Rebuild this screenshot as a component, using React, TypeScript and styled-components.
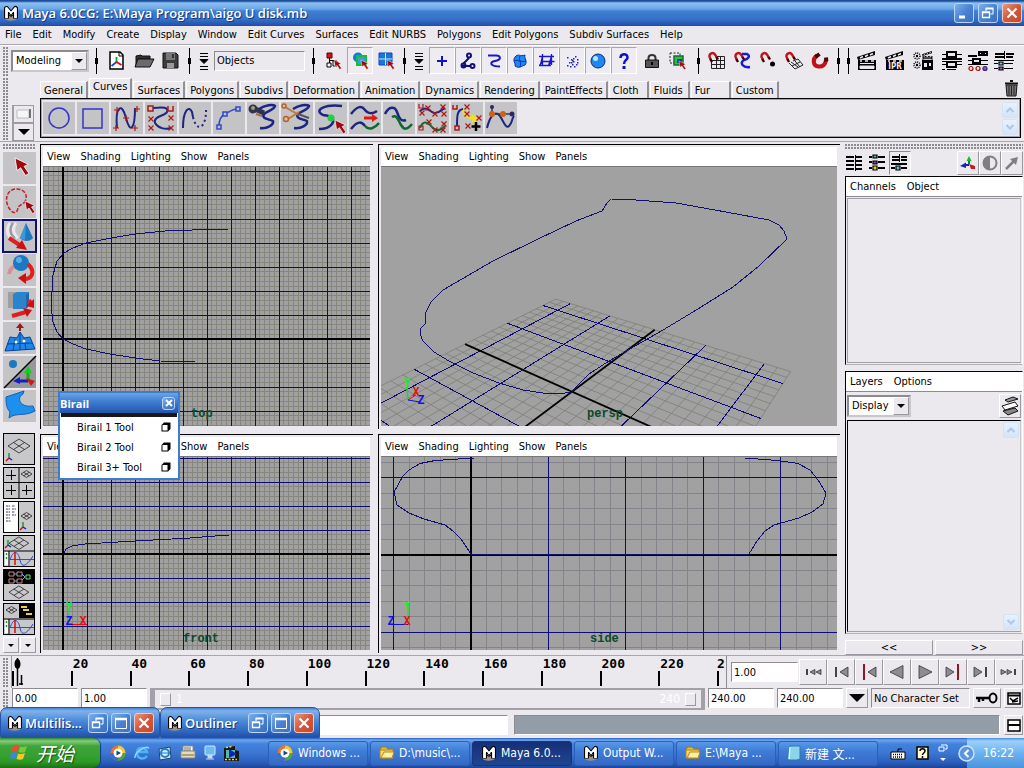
import React from "react";
import styled, { createGlobalStyle, css } from "styled-components";

const FACE = "#ebe9ed";
const UI_FONT = `"DejaVu Sans Condensed", Roboto, "Liberation Sans", "Noto Sans CJK SC", sans-serif`;
const TITLE_FONT = `"Open Sans", "Noto Sans", sans-serif`;
const NAVY = "#10106e";

const Global = createGlobalStyle`
  *, *::before, *::after { box-sizing: border-box; }
  body { margin: 0; background: ${FACE}; font: 11px ${UI_FONT}; color: #000; }
  button, input, select { font: inherit; color: inherit; margin: 0; padding: 0; border: 0; border-radius: 0; background: none; }
  svg { display: block; flex: none; }
`;

/* ---------- shared parts ---------- */

const sunken = css`
  border: 1px solid;
  border-color: #8d8b90 #fff #fff #8d8b90;
`;
const raised = css`
  border: 1px solid;
  border-color: #fff #9a989e #9a989e #fff;
`;

const Screen = styled.div`
  position: relative;
  min-height: 100vh;
  display: flex;
  flex-direction: column;
  overflow: hidden;
  background: ${FACE};
`;

const Grip = styled.div<{ $across?: boolean }>`
  flex: none;
  ${(p) => (p.$across ? "height: 6px;" : "width: 6px; align-self: stretch; margin: 2px 2px 0 3px;")}
  background-image: radial-gradient(circle at 1px 1px, #8d8b92 1px, transparent 1px);
  background-size: 3px 3px;
`;

const Field = styled.input<{ $w?: number; $flat?: boolean }>`
  ${sunken}
  flex: none;
  width: ${(p) => p.$w ?? 66}px;
  height: 20px;
  padding: 0 2px;
  background: ${(p) => (p.$flat ? FACE : "#fff")};
`;

const Art = styled.svg`
  overflow: visible;
`;

const Cross = ({ x, y, c = "#b01818", plus }: { x: number; y: number; c?: string; plus?: boolean }) => (
  <path
    d={plus ? `M${x - 3} ${y}h6M${x} ${y - 3}v6` : `M${x - 2.5} ${y - 2.5}l5 5M${x + 2.5} ${y - 2.5}l-5 5`}
    stroke={c}
    strokeWidth="1.2"
    fill="none"
  />
);

const Cursor = ({ x, y, s = 1 }: { x: number; y: number; s?: number }) => (
  <path
    transform={`translate(${x} ${y}) scale(${s})`}
    d="M0 0L1.500 9L4 7L7.500 12.500L10 11L6.500 6L9.500 4.500Z"
    fill="#a00810"
    stroke="#fff"
    strokeWidth=".6"
  />
);

/* ---------- title bar ---------- */

const TitleBar = styled.header`
  height: 26px;
  display: flex;
  align-items: center;
  padding: 0 2px 0 3px;
  gap: 3px;
  background: linear-gradient(#1c4c9c 0, #1c4c9c 1px, #8cc0ee 3px, #6ba7e6 9px, #3f80d2 11px, #3571c8 19px, #2453ae 25px, #1d479c);
`;

const TitleText = styled.h1`
  flex: 1;
  margin: 0;
  font: 600 13px/20px ${TITLE_FONT};
  color: #fff;
  text-shadow: 1px 1px 0 #16357c;
  white-space: nowrap;
`;

const CaptionButton = styled.button<{ $close?: boolean; $size?: number }>`
  flex: none;
  width: ${(p) => p.$size ?? 20}px;
  height: ${(p) => p.$size ?? 20}px;
  margin-left: 1px;
  display: grid;
  place-items: center;
  border: 1px solid ${(p) => (p.$close ? "#f0c9c0" : "#b9d4f4")};
  border-radius: 3px;
  background: ${(p) =>
    p.$close ? "linear-gradient(135deg, #e89880, #d5573a 50%, #c4492c)" : "linear-gradient(135deg, #7eb0ea, #4a83d2 50%, #3a70c4)"};
`;

const CaptionGlyph = ({ kind }: { kind: "min" | "restore" | "max" | "close" }) => (
  <Art width="12" height="12" viewBox="0 0 12 12" fill="none" stroke="#fff" strokeWidth="1">
    {kind === "min" && <path d="M1 10h6" strokeWidth="3" />}
    {kind === "restore" && (
      <>
        <path d="M4 4V1.500h7V7H8.500" />
        <path d="M3.500 1.500h8" strokeWidth="2" />
        <path d="M.5 5h7v5.500h-7zM.5 5.500h7" strokeWidth="1.300" />
      </>
    )}
    {kind === "max" && (
      <>
        <path d="M.5 1.500h11v10H.5z" />
        <path d="M0 2h12" strokeWidth="2.500" />
      </>
    )}
    {kind === "close" && <path d="M1.500 1.500l9 9M10.500 1.500l-9 9" strokeWidth="2.200" />}
  </Art>
);

const MayaLogo = () => (
  <Art width="16" height="18" viewBox="0 0 16 18">
    <path d="M1 14c2-3 12-3 14 0c-2 3-12 4-14 0z" fill="#9a9286" />
    <g fill="none" strokeLinejoin="round">
      <path d="M3.500 14.500V4.500L8 10L12.500 4.500V14.500" stroke="#000" strokeWidth="5" />
      <path d="M3.500 14V4.500L8 10L12.500 4.500V14" stroke="#fff" strokeWidth="2.800" />
      <path d="M5.500 14V8L8 11.500L10.500 8V14" stroke="#000" strokeWidth="1" />
    </g>
  </Art>
);

/* ---------- main menu ---------- */

const MenuBar = styled.nav`
  height: 19px;
  display: flex;
  align-items: center;
  gap: 11px;
  padding: 0 5px;
  border-bottom: 1px solid #a9a7ac;
  white-space: nowrap;
  box-shadow: 0 1px 0 #fff;
`;

const MenuItem = styled.button`
  line-height: 18px;
`;

/* ---------- status line ---------- */

const StatusLine = styled.div`
  height: 31px;
  display: flex;
  align-items: center;
`;

const SelectBox = styled.label<{ $w: number }>`
  position: relative;
  flex: none;
  width: ${(p) => p.$w}px;
  height: 22px;
  border: 2px solid;
  border-color: #8d8b90 #c9c7cc #c9c7cc #8d8b90;
  background: #fff;
  select {
    appearance: none;
    width: 100%;
    height: 18px;
    padding-left: 3px;
    outline: none;
  }
  &::after {
    content: "";
    position: absolute;
    right: 0;
    top: 0;
    width: 16px;
    height: 18px;
    ${raised}
    background: ${FACE};
    pointer-events: none;
  }
  svg {
    position: absolute;
    z-index: 1;
    right: 4px;
    top: 7px;
    pointer-events: none;
  }
`;

const DownTri = ({ w = 8 }: { w?: number }) => (
  <Art width={w} height={w / 2} viewBox="0 0 8 4">
    <path d="M0 0h8L4 4z" />
  </Art>
);

const Divider = styled.span`
  flex: none;
  width: 10px;
  height: 26px;
  background:
    linear-gradient(#000, #000) center / 3px 6px no-repeat,
    linear-gradient(#000, #000) center / 1px 26px no-repeat;
`;

const Group = styled.div<{ $pad?: number }>`
  flex: none;
  display: flex;
  align-items: center;
  padding: 0 ${(p) => p.$pad ?? 0}px;
`;

const ToolCell = styled.button<{ $w?: number; $pressed?: boolean }>`
  flex: none;
  width: ${(p) => p.$w ?? 26}px;
  height: 27px;
  display: grid;
  place-items: center;
  ${(p) => p.$pressed && css`
    border: 1px solid;
    border-color: #a9a7ac #fff #fff #a9a7ac;
    background: #eeecf1;
  `}
`;

const Magnet = ({ big }: { big?: boolean }) =>
  big ? (
    <g fill="none" strokeWidth="4">
      <path d="M5 3.500C0 7 1 14 6.500 14.500C11 15 13.500 12 14 8" stroke="#c01018" />
      <path d="M3.500 5L7.500 2M14.300 9.500L14 5.500" stroke="#4a0408" />
    </g>
  ) : (
    <g fill="none" strokeWidth="2.400">
      <path d="M3 8L1.500 5C1 1 5 0 7 2.500L9 6" stroke="#c01018" />
      <path d="M2.300 7L4 10M8.500 5L10 7.500" stroke="#300" />
    </g>
  );

const Clapper = ({ x = 0, s = 1, children }: { x?: number; s?: number; children?: React.ReactNode }) => (
  <g transform={`translate(${x} 0) scale(${s})`}>
    <path d="M0 6L18 0V4L1 9z" />
    <path d="M3 7l3-1.500M8 5.500l3-1.500M13 4l3-1.500" stroke={FACE} strokeWidth="1.500" />
    <path d="M1 9h18v10H1z" />
    <path d="M3 10h2M8 10h3M14 10h3" stroke={FACE} strokeWidth="1.500" />
    {children ?? <path d="M3 12.500h14M3 15v2.500h14V15z" stroke={FACE} fill={FACE} />}
  </g>
);

const Bars = ({ d, extra }: { d: string; extra?: React.ReactNode }) => (
  <Art width="20" height="20" viewBox="0 0 20 20" fill="none" stroke="#000" strokeWidth="1.2">
    <path d={d} shapeRendering="crispEdges" />
    {extra}
  </Art>
);

const icon = (w: number, h: number, body: React.ReactNode) => (
  <Art width={w} height={h} viewBox={`0 0 ${w} ${h}`}>
    {body}
  </Art>
);

const MenuMarks = () =>
  icon(10, 18, <path d="M1 1.500h8M1 4.500h8M1 14.500h8M1 17.500h8M1 7.500h8L5 11.500z" stroke="#000" strokeWidth="1" />);

const fileIcons = [
  icon(15, 19, <>
    <path d="M1 1h10l3 3v14H1z" fill="#fff" stroke="#000" strokeWidth="1.500" />
    <path d="M10 1v4h4" fill="none" stroke="#000" />
    <path d="M7.500 6v5" stroke="#10a030" strokeWidth="1.800" />
    <path d="M7.500 11l-5 4" stroke="#2040d0" strokeWidth="1.800" />
    <path d="M7.500 11l5 3" stroke="#d01010" strokeWidth="1.800" />
  </>),
  icon(20, 14, <>
    <path d="M2 2l5-1 1 1h8v3H4L2 12z" fill="#333" stroke="#111" />
    <path d="M4 5h16l-4 8H1z" fill="#6b6b6b" stroke="#111" />
  </>),
  icon(17, 17, <>
    <path d="M1 1h13l2 2v13H1z" fill="#3c3c3c" stroke="#111" />
    <path d="M4 1h9v7H4z" fill="#777" />
    <path d="M5 11h7v5H5z" fill="#999" />
    <path d="M10 2h2v4h-2z" fill="#333" />
  </>),
];

const modeIcons = [
  icon(16, 17, <>
    <path d="M1 1h5v5H1z" fill="#e01010" stroke="#500" />
    <path d="M3.500 6v6M3.500 8.500h5V12" fill="none" stroke="#000" />
    <path d="M1 11h4v4H1zM7 9h4v5H7z" fill="#fff" stroke="#000" />
    <Cursor x={8} y={8} s={0.75} />
  </>),
  icon(17, 17, <>
    <circle cx="6" cy="5.500" r="5" fill="#1878d8" />
    <path d="M5 4h9v9H5z" fill="#3a9be0" stroke="#10c030" strokeWidth="2" />
    <Cursor x={9} y={8} s={0.75} />
  </>),
  icon(17, 17, <>
    <path d="M1 1h13v12H1z" fill="#1878d8" stroke="#1040c0" />
    <path d="M7.500 1v12M1 7h13" stroke="#c8e4ff" />
    <Cursor x={9} y={8} s={0.75} />
  </>),
];

const maskIcons = [
  icon(12, 12, <path d="M6 1v10M1 6h10" stroke="#1010d0" strokeWidth="2" />),
  icon(16, 18, <g fill="none" stroke="#101078" strokeWidth="2">
    <circle cx="9" cy="3.500" r="2" /><path d="M9 6L3 12M2 14h9" /><circle cx="3.500" cy="13.500" r="2" /><circle cx="12.500" cy="14" r="2" />
  </g>),
  icon(14, 14, <path d="M1 1.500h8c5 0 5 4 1 5l-4 1c-4 2-1 5 7 5" fill="none" stroke="#1818c8" strokeWidth="2" />),
  icon(16, 16, <>
    <path d="M3 4C6 0 8 4 13 2C12 6 16 8 13 12C9 13 8 16 3 13C4 10 0 8 3 4z" fill="#1c88f0" stroke="#0a30b0" />
    <path d="M2 8C7 6 9 10 14 8M8 3C6 7 10 9 8 14" fill="none" stroke="#0a30b0" />
  </>),
  icon(17, 16, <g fill="none" stroke="#1818c8" strokeWidth="1.300">
    <path d="M4.500 1v12M13.500 1v11M1 3.500h15M1 12.500h12M3.500 8.500h13M4.500 3.500l-2 8M13.500 3.500l-3 9M4.500 8.500l-3 4M13.500 8.500l-3 4" />
  </g>),
  icon(14, 14, <g fill="#2020c0">
    {[[2, 3], [6, 5], [10, 2], [12, 5], [8, 7], [4, 8], [7, 10], [2, 11], [5, 12], [11, 10], [9, 12], [12, 8], [7, 6], [8, 4], [6, 8]].map(([x, y]) => (
      <rect key={`${x}-${y}`} x={x} y={y} width="1.500" height="1.500" />
    ))}
  </g>),
  icon(16, 16, <>
    <circle cx="8" cy="8" r="7" fill="#1c88f0" stroke="#0a2a80" /><circle cx="5.500" cy="5.500" r="2.500" fill="#b8e8ff" />
  </>),
  icon(10, 16, <>
    <path d="M1.500 5C1.500 0 8.500 0 8.500 4.500C8.500 7 5 7 5 11" fill="none" stroke="#1010c8" strokeWidth="2.500" />
    <rect x="3.500" y="13" width="3" height="3" fill="#1010c8" />
  </>),
];

const lockIcons = [
  icon(14, 14, <>
    <path d="M3.500 6V4c0-4 7-4 7 0v2" fill="none" stroke="#333" strokeWidth="2" />
    <path d="M.5 6h13v7.500H.5z" fill="#555" stroke="#111" /><rect x="6" y="8" width="2" height="3" />
  </>),
  icon(18, 18, <>
    <path d="M1 1h10v10H1z" fill="none" stroke="#222" strokeDasharray="2 1.500" />
    <path d="M5 4h9v9H5z" fill="#28c050" stroke="#107030" strokeWidth="1.500" /><path d="M8 7h5v4H8z" fill="#1a3c90" />
    <Cursor x={10} y={9} s={0.7} />
  </>),
];

const snapIcons = [
  icon(17, 17, <><path d="M7 4.500h9.500v12h-13V9M8.500 5v11M12.500 5v11M4 8.500h12M4 12.500h12" fill="none" stroke="#222" /><Magnet /></>),
  icon(17, 17, <><path d="M8 2h5c4 2 1 5-3 6c-5 3-1 8 6 7" fill="none" stroke="#1818d8" strokeWidth="2.500" /><Magnet /></>),
  icon(17, 17, <><circle cx="12.500" cy="12" r="2.500" /><Magnet /></>),
  icon(19, 18, <><path d="M4 11l6 6 8-4-5-6-5 2M7 14l8-4M10 9l5 6M6 10l7 5" fill="none" stroke="#222" /><Magnet /></>),
  icon(17, 17, <Magnet big />),
];

const renderIcons = [
  icon(20, 19, <Clapper />),
  icon(20, 19, <Clapper><text x="10" y="18" textAnchor="middle" fontSize="8" fontWeight="bold" fill={FACE}>IPR</text></Clapper>),
  icon(20, 19, <>
    <g fill="none" stroke="#000" strokeDasharray="1 1" strokeWidth="1.500"><circle cx="4" cy="5" r="3" /><circle cx="4" cy="14" r="3" /></g>
    <circle cx="4" cy="5" r="1.200" /><circle cx="4" cy="14" r="1.200" />
    <Clapper x={9} s={0.55} /><path d="M9 9h11v10H9z" /><path d="M11 12h3v4h-3zM16 12h2v3h-2z" fill={FACE} />
  </>),
];

const editorIcons = [
  <Bars key="a" d="M0 3.500h5M14 3.500h6M5 1h9v5H5zM0 8h20M0 13.500h5M14 13.500h6M5 11h9v5H5zM5 18.500h9M0 18.500h3M0 10.500h4M15 10.500h5" />,
  <Bars key="b" d="M0 5h9M11 1h3v3h-3zM16 1h3v3h-3zM0 9.500h5M13 9.500h7M5 8h7v4H5zM0 13.500h20" extra={<>
    <circle cx="3" cy="17.500" r="2" stroke="#a01010" /><circle cx="10" cy="17.500" r="2" stroke="#a01010" /><circle cx="17" cy="17.500" r="2" stroke="#402080" fill="#806090" /></>} />,
  <Bars key="c" d="M1 3h9M1 6h9M10.500 0v8M12 3h8M12 6h7M0 9.500h20M0 12.500h4M10 12.500h9M0 17.500h4M10 17.500h9" extra={<>
    <path d="M5 11h4v3H5z" fill="#60d0d0" /><path d="M5 16h4v3H5z" fill="#a060c0" /></>} />,
];

/* ---------- shelf ---------- */

const ShelfArea = styled.section`
  height: 66px;
  display: flex;
  border-bottom: 1px solid #a9a7ac;
`;

const ShelfSwitch = styled.div`
  width: 24px;
  display: flex;
  flex-direction: column;
  justify-content: flex-end;
  align-items: flex-start;
  margin-left: 1px;
`;

const ShelfSwitchButton = styled.button`
  width: 22px;
  height: 18px;
  display: grid;
  place-items: center;
  ${raised}
  border-left: 2px solid #a09ea4;
  border-top-color: #a09ea4;
`;

const ShelfMain = styled.div`
  flex: 1;
  min-width: 0;
  padding: 2px 3px 0 4px;
`;

const TabRow = styled.div`
  display: flex;
  align-items: flex-end;
  height: 20px;
  gap: 1px;
`;

const Tab = styled.button<{ $active?: boolean }>`
  flex: none;
  height: ${(p) => (p.$active ? 20 : 17)}px;
  padding: 0 3px;
  min-width: 40px;
  text-align: left;
  border-right: 2px solid #918f95;
  border-top: 1px solid #fff;
  border-left: 1px solid #fff;
  ${(p) => p.$active && "padding-bottom: 4px;"}
`;

const Trash = styled.button`
  margin-left: auto;
  width: 16px;
  height: 20px;
`;

const ShelfBody = styled.div`
  height: 40px;
  display: flex;
  align-items: center;
  gap: 2px;
  padding: 0 2px;
  border: 1px solid #000;
  box-shadow: inset 0 0 0 1px #a3a1a7;
`;

const ShelfButton = styled.button`
  flex: none;
  width: 32px;
  height: 32px;
  background: #c4c3c6;
`;

const ScrollPair = styled.div`
  margin-left: auto;
  display: flex;
  flex-direction: column;
  gap: 1px;
`;

const ScrollButton = styled.button`
  width: 16px;
  height: 16px;
  display: grid;
  place-items: center;
  border: 1px solid #d4e4f7;
  border-radius: 2px;
  background: linear-gradient(#e6f1fd, #d4e5fa);
`;

const Chevron = ({ down }: { down?: boolean }) => (
  <Art width="8" height="6" viewBox="0 0 8 6" fill="none" stroke="#b0c6e2" strokeWidth="2">
    <path d={down ? "M0.500 1L4 4.500L7.500 1" : "M0.500 5L4 1.500L7.500 5"} />
  </Art>
);

const curve = { fill: "none", stroke: "#1c2484", strokeWidth: 2 };
const S_CURVE = "M12 7C18 3 26 2 28 4C27 8 20 9 17 12C14 17 22 17 26 19C27 23 20 27 13 26";

const shelfIcons: [string, React.ReactNode][] = [
  ["Circle", <circle cx="16" cy="16" r="10" fill="none" stroke="#3434cc" strokeWidth="1.500" />],
  ["Square", <path d="M6 7h19v19H6z" fill="none" stroke="#3434cc" strokeWidth="1.500" />],
  ["CV Curve", <><path d="M6 26C4 4 11 0 15 16S24 28 24 6" {...curve} /><Cross x={5} y={26} plus /><Cross x={6} y={8} plus /><Cross x={15} y={16} plus /><Cross x={24} y={26} plus /><Cross x={26} y={7} plus /></>],
  ["EP Curve", <><path d="M8 6C18 5 24 5 22 10C20 14 8 14 10 21C13 26 20 28 26 26" {...curve} />
    <path d="M3 4h5v5H3zM23 4v5h5V4" fill="none" stroke="#b01818" strokeWidth="1.500" /><Cross x={6} y={17} /><Cross x={6} y={26} /><Cross x={26} y={16} /><Cross x={26} y={26} /></>],
  ["Pencil Curve", <><path d="M4 26C4 8 10 3 13 10L14 15" {...curve} /><path d="M14 15C18 32 28 26 27 5" {...curve} strokeDasharray="2 3" /></>],
  ["Arc", <><path d="M6 24C6 18 8 14 12 12S20 7 24 7" fill="none" stroke="#3048d0" strokeWidth="1.500" />
    <path d="M4 23h4v4H4zM10 10h4v4h-4zM23 5h4v4h-4z" fill="#c4c3c6" stroke="#3048d0" strokeWidth="1.500" /></>],
  ["Attach", <><path d={S_CURVE} {...curve} strokeWidth="2.500" /><circle cx="6" cy="7" r="4.500" fill="#2c3450" /><path d="M6 6L17 11" stroke="#2c3450" strokeWidth="5" /><circle cx="6" cy="6" r="2" fill="#b09878" /><path d="M9 12l6 2" stroke="#a86a40" strokeWidth="2" /></>],
  ["Detach", <><path d={S_CURVE} {...curve} strokeWidth="2.500" /><path d="M4 5L18 13M7 17L18 10" stroke="#c07840" strokeWidth="2" /><circle cx="3" cy="4" r="2" fill="none" stroke="#c06020" strokeWidth="1.500" /><circle cx="5" cy="17" r="2.500" fill="none" stroke="#c06020" strokeWidth="1.500" /><path d="M17 12l11 4" stroke="#555" strokeWidth="2" /></>],
  ["Insert Knot", <><path d="M27 4C10 2 -2 8 8 13C18 14 20 18 17 22C14 26 9 27 4 27" {...curve} strokeWidth="2.500" /><circle cx="16" cy="16" r="3.500" fill="#20d040" /><Cursor x={20} y={18} s={1.1} /></>],
  ["Extend", <><path d="M2 12C9 3 13 4 16 8S24 12 28 9M2 27C9 18 13 20 16 24" {...curve} strokeWidth="2.500" /><path d="M16 24C20 29 26 26 30 21" fill="none" stroke="#0c6a30" strokeWidth="2.500" /><path d="M15 14.500h8v-2.500l6 4-6 4v-2.500h-8z" fill="#e01818" /></>],
  ["Offset", <><path d="M2 12C6 4 12 4 14 10S18 20 23 18" {...curve} strokeWidth="2.500" /><path d="M9 15C14 12 15 18 18 23S24 28 29 22" fill="none" stroke="#0c6a30" strokeWidth="2.500" /></>],
  ["Rebuild", <><path d="M3 9C10 3 13 10 17 11S24 8 28 6" {...curve} /><path d="M3 26C7 16 12 22 16 26S24 28 28 24" fill="none" stroke="#0c6a30" strokeWidth="2" />
    <Cross x={5} y={11} /><Cross x={11} y={6} /><Cross x={18} y={12} /><Cross x={26} y={5} /><Cross x={27} y={12} /><Cross x={12} y={20} /><Cross x={18} y={28} /><Cross x={27} y={22} /><Cross x={26} y={28} /><path d="M2 2v4h4V2M2 24h4v4H2z" fill="none" stroke="#b01818" strokeWidth="1.200" /></>],
  ["Add Points", <><path d="M6 24C6 14 6 8 12 7" {...curve} /><path d="M12 8C14 14 18 16 24 17M21 13l5 4-5 3" fill="none" stroke="#f0e020" strokeWidth="2.500" /><path d="M2 3v4h4V3M4 24h4v4H4z" fill="none" stroke="#b01818" strokeWidth="1.500" /><Cross x={16} y={5} /><Cross x={17} y={24} /><Cross x={16} y={12} /><Cross x={28} y={16} /><path d="M25 20v9M20.500 24.500h9" stroke="#000" strokeWidth="2.500" /></>],
  ["Curve Editing", <><path d="M2 26C5 14 9 10 13 12S20 28 24 24S26 18 29 14" {...curve} /><path d="M7 5V12M7 12H27" stroke="#383848" strokeWidth="1.500" /><circle cx="7" cy="5" r="2" fill="#28286a" /><circle cx="7" cy="12" r="3" fill="#d06018" /><circle cx="18" cy="12" r="3" fill="#d06018" /><circle cx="27" cy="12" r="2.500" fill="#28286a" /></>],
];

/* ---------- tool box ---------- */

const Workspace = styled.main`
  flex: 1;
  display: flex;
  align-items: stretch;
`;

const ToolBox = styled.aside`
  flex: none;
  width: 40px;
  padding: 2px 4px 2px 3px;
  display: flex;
  flex-direction: column;
  gap: 2px;
`;

const ToolButton = styled.button<{ $active?: boolean }>`
  width: 33px;
  height: 32px;
  display: grid;
  place-items: center;
  background: #c4c3c6;
  ${(p) => p.$active && "outline: 2px solid #10107c; outline-offset: -1px;"}
`;

const LayoutButtons = styled.div`
  margin-top: auto;
  display: flex;
  flex-direction: column;
  gap: 2px;
`;

const LayoutButton = styled.button`
  width: 32px;
  height: 32px;
  border: 1px solid #000;
  background: #c8c7ca;
`;

const ArrowPair = styled.div`
  display: flex;
  gap: 1px;
  button {
    width: 16px;
    height: 16px;
    display: grid;
    place-items: center;
    ${raised}
  }
`;

const RedArrow = ({ d, head }: { d: string; head: string }) => (
  <><path d={d} fill="none" stroke="#e02020" strokeWidth="4" /><path d={head} fill="#d01010" /></>
);

const toolIcons: [string, React.ReactNode][] = [
  ["Select", <Cursor x={11} y={6} s={1.4} />],
  ["Lasso", <><path d="M20 17C26 9 19 2 11 3S0 14 5 22S14 26 14 21L21 16" fill="none" stroke="#c02030" strokeWidth="1.500" strokeDasharray="4 1.500" /><Cursor x={21} y={15} s={1} /></>],
  ["Move", <><path d="M6 3C2 8 3 15 7 18M12 3C8 8 9 14 14 18" fill="none" stroke="#e8e8ea" strokeWidth="3" /><path d="M9 3C5 8 6 15 11 18" fill="none" stroke="#9a9a9e" strokeWidth="2" /><path d="M22 3L29 18C26 22 19 22 16 18z" fill="#1c78c0" /><path d="M22 3L16 18c2 1 4 2 5 2z" fill="#3c98d8" /><RedArrow d="M5 18L17 26" head="M23 30L12 28L18 20z" /></>],
  ["Rotate", <><path d="M5 20C6 14 10 12 14 12" fill="none" stroke="#d89090" strokeWidth="4" /><circle cx="17" cy="9" r="8" fill="#1c78c0" /><circle cx="15" cy="6" r="3" fill="#58acec" /><path d="M24 10C32 18 28 25 20 25" fill="none" stroke="#e02020" strokeWidth="4" /><path d="M14 24L22 19V30z" fill="#d01010" /></>],
  ["Scale", <><path d="M4 4h13v16H4z" fill="#a0a0a4" /><path d="M9 6h13l3-2v14l-3 3H9z" fill="#1c68a8" /><path d="M9 6l4-2h12l-3 3v14h-13z" fill="#2a84cc" /><RedArrow d="M8 28L22 24" head="M28 22L19 20L23 29z" /><RedArrow d="M25 12L28 17" head="M30 20L22 18L30 11z" /></>],
  ["Soft Modification", <><path d="M1 29L6 15L13 16L16 10L20 16L26 15L31 27z" fill="#1c88e8" stroke="#0a40a0" /><path d="M3 22L28 21M11 17L9 29M20 16L22 28M16 10V28" stroke="#0a40a0" /><path d="M16 9V4" stroke="#a01818" strokeWidth="2" /><path d="M16 1L12 6h8z" fill="#a01818" /><circle cx="12" cy="20" r="1.500" fill="#ffc" /><circle cx="20" cy="19" r="1.500" fill="#ffc" /></>],
  ["Show Manipulator", <><path d="M32 0V32H0z" fill="#98979a" /><path d="M0 32L32 0" stroke="#000" strokeWidth="1.500" /><circle cx="9" cy="8" r="4" fill="#1c78c0" /><path d="M24 24V13" stroke="#10b020" strokeWidth="3" /><path d="M24 10L20 17h8z" fill="#10d020" /><path d="M24 25H13" stroke="#1020c0" strokeWidth="3" /><path d="M9 25L16 21V28z" fill="#1020d0" /><path d="M22 22L31 25L27 30z" fill="#d01818" /></>],
  ["Last Tool", <path d="M2 7L20 1L19 4C12 8 16 18 29 16L31 21C20 27 12 22 5 28L6 22C2 18 2 12 2 7z" fill="#1c90ec" stroke="#1460b8" />],
];

const Diamond = ({ x, y, s = 1 }: { x: number; y: number; s?: number }) => (
  <g transform={`translate(${x} ${y}) scale(${s})`} fill="none" stroke="#222" strokeWidth={0.8 / s}>
    <path d="M0 8L11 1L22 8L11 15zM5.500 4.500L16.500 11.500M16.500 4.500L5.500 11.500" />
  </g>
);
const MiniAxis = ({ x, y }: { x: number; y: number }) => (
  <g transform={`translate(${x} ${y})`} fill="none" strokeWidth="1.500">
    <path d="M0 0v-5" stroke="#10a030" /><path d="M0 0l-3 3" stroke="#d01010" /><path d="M0 0l3 2" stroke="#1020d0" />
  </g>
);
const GraphArt = () => (
  <><path d="M0 15h30M5 15v15" stroke="#000" fill="none" /><path d="M1 16h3v13H1z" fill="#fff" /><path d="M2.500 17v2M2.500 21v2" stroke="#10a030" strokeWidth="1.500" /><path d="M6 23.500h24" stroke="#555" /><path d="M6 24C9 14 14 14 16 24S24 28 29 20" fill="none" stroke="#2848d0" /><path d="M11 16v13" stroke="#d01010" strokeWidth="1.500" /></>
);
const layoutIcons: [string, React.ReactNode][] = [
  ["Single Perspective", <><Diamond x={4} y={4} /><MiniAxis x={5} y={24} /></>],
  ["Four View", <><path d="M15 0v30M0 14.500h30M7.500 2v10M2 7.500h10M7.500 17v10M2 22.500h10M22.500 17v10M18 22.500h10" fill="none" stroke="#000" /><Diamond x={17} y={2} s={0.5} /></>],
  ["Outliner / Persp", <><path d="M0 0h14v30H0z" fill="#fff" /><path d="M14.500 0v30" stroke="#000" /><path d="M2 4h4M8 4h3M2 7h4M8 7h4M2 10h4M8 10h3M2 13h4M8 13h4M2 16h4M2 19h5" stroke="#446" strokeDasharray="2 .5" /><Diamond x={17} y={10} s={0.5} /><MiniAxis x={19} y={25} /></>],
  ["Persp / Graph", <><Diamond x={5} y={0} s={0.9} /><MiniAxis x={4} y={9} /><GraphArt /></>],
  ["Hypershade / Persp", <><path d="M0 0h30v14H0z" /><path d="M5 2h5v4H5zM13 2h5v4h-5zM5 9h5v4H5zM13 9h5v4h-5z" fill="none" stroke="#c88" /><path d="M22 5h4v4h-4z" fill="none" stroke="#6e6" /><path d="M10 4h3M10 11h3M18 4l3 3-3 3" stroke="#7ac" fill="none" /><Diamond x={5} y={15} s={0.9} /></>],
  ["Persp / Hypergraph / Graph", <><Diamond x={2} y={2} s={0.5} /><path d="M15 0h15v14H15z" /><path d="M17 3h6M19 6h6M22 10h6" stroke="#e8d040" strokeWidth="2" /><GraphArt /></>],
];

/* ---------- viewports ---------- */

const Views = styled.div`
  flex: 1;
  min-width: 0;
  display: grid;
  grid-template-columns: minmax(0, 333fr) minmax(0, 462fr);
  grid-template-rows: minmax(0, 285fr) minmax(0, 219fr);
  gap: 5px;
  padding: 2px 2px 2px 0;
`;

const ViewPanel = styled.section`
  display: flex;
  flex-direction: column;
  border-left: 1px solid #000;
  border-top: 1px solid #000;
  padding: 2px 3px 3px 2px;
`;

const ViewMenu = styled.nav`
  height: 19px;
  flex: none;
  display: flex;
  align-items: center;
  gap: 10px;
  padding-left: 4px;
  background: #fff;
`;

const Canvas = styled.svg`
  flex: 1;
  width: 100%;
  min-height: 0;
  border-top: 1px solid #77767a;
  background: #a1a1a1;
  overflow: hidden;
`;

const CanvasLabel = styled.text`
  font: bold 12px "Liberation Mono", monospace;
`;

type Box = [number, number, number, number];
type Pt = [number, number];

const orthoGrid = ([x, y, w, h]: Box, [ox, oy]: Pt, major: number) => {
  let minorD = "";
  let majorD = "";
  const step = major / 5;
  const add = (n: number, d: string) => {
    if (n % 5 === 0) majorD += d;
    else minorD += d;
  };
  for (let n = Math.ceil((x - ox) / step); ox + n * step < x + w; n++)
    if (n !== 0) add(n, `M${Math.floor(ox + n * step) + 0.5} ${y}v${h}`);
  for (let n = Math.ceil((y - oy) / step); oy + n * step < y + h; n++)
    if (n !== 0) add(n, `M${x} ${Math.floor(oy + n * step) + 0.5}h${w}`);
  return { minorD, majorD };
};

const Axis = ({ at, c, children }: { at: Pt; c: string; children: string }) => (
  <CanvasLabel x={at[0]} y={at[1]} fill={c} textAnchor="middle">{children}</CanvasLabel>
);

const Ortho = ({ box, origin, major, minorColor, children }: { box: Box; origin: Pt; major: number; minorColor: string; children: React.ReactNode }) => {
  const { minorD, majorD } = orthoGrid(box, origin, major);
  return (
    <Canvas viewBox={box.join(" ")} preserveAspectRatio="xMinYMin slice">
      <g fill="none" shapeRendering="crispEdges">
        <path d={minorD} stroke={minorColor} />
        <path d={majorD} stroke="#0c0c74" />
        <path d={`M${origin[0]} ${box[1]}v${box[3]}M${box[0]} ${origin[1]}h${box[2]}`} stroke="#000" strokeWidth="2" />
      </g>
      {children}
    </Canvas>
  );
};

/* Projects a ground-plane point (grid units) onto the perspective view. */
const project = (u: number, v: number): string => {
  const w = 1 - 0.0166 * u + 0.022 * v;
  const x = (22.3 * u + 39.06 * v + 588) / w / 3 + 376;
  const y = (1.917 * u - 3.246 * v + 743) / w / 3 + 144;
  return `${x.toFixed(1)} ${y.toFixed(1)}`;
};

const PerspGrid = () => {
  let minorD = "";
  let majorD = "";
  for (let n = -12; n <= 12; n++) {
    const d = `M${project(n, -12)}L${project(n, 12)}M${project(-12, n)}L${project(12, n)}`;
    if (n === 0) continue;
    if (n % 5 === 0) majorD += d;
    else minorD += d;
  }
  return (
    <g fill="none">
      <path d={minorD} stroke="#7f7f76" strokeWidth=".8" />
      <path d={majorD} stroke="#0c0c74" shapeRendering="crispEdges" />
      <path d={`M${project(0, -12)}L${project(0, 12)}M${project(-12, 0)}L${project(12, 0)}`} stroke="#000" strokeWidth="1.800" />
    </g>
  );
};

const CURVE = { fill: "none", stroke: NAVY, strokeWidth: 1, shapeRendering: "crispEdges" as const };
const LABEL = "#0c4a2c";

const TopView = () => (
  <Ortho box={[43, 167, 327, 259]} origin={[63, 339]} major={24} minorColor="#86867e">
    <polyline {...CURVE} points="229,229 192,230 165,231 135,234 111,238 86,243 73,248 64,253 57,261 53,275 52,292 51,305 53,322 57,332 63,339 73,344 86,349 110,354 135,358 160,361 195,362" />
    <CanvasLabel x="191" y="417" fill={LABEL}>top</CanvasLabel>
  </Ortho>
);

const PerspView = () => (
  <Canvas viewBox="381 167 456 259" preserveAspectRatio="xMinYMin slice">
    <PerspGrid />
    <polygon {...CURVE} points="611,199 629,199.500 676,203 726,212 769,220 779,225 784,231 787,239 759,266 733,287 693,312 663,330 609,361 589,374 578,385 572,392 559,394 543,393 523,390 499,383 473,373 449,361 434,352 423,341 420,334 421,328 425,324 426,312 431,302 443,290 493,261 536,240 576,221 602,211 607,203" />
    <path d="M407 387L408 400" stroke="#10e020" strokeWidth="1.500" /><path d="M408 400l8-5" stroke="#e01010" /><path d="M408 400l12 2" stroke="#1010e0" />
    <Axis at={[407, 387]} c="#10f020">Y</Axis>
    <Axis at={[416, 396]} c="#e01010">X</Axis>
    <Axis at={[421, 404]} c="#1010e0">Z</Axis>
    <CanvasLabel x="587" y="417" fill={LABEL}>persp</CanvasLabel>
  </Canvas>
);

const FrontView = () => (
  <Ortho box={[43, 457, 327, 193]} origin={[63, 554]} major={24} minorColor="#86867e">
    <polyline {...CURVE} points="64,553 66,549 72,546 85,544 110,542.500 135,541 190,538 215,536 229,535" />
    <path d="M69 608v12" stroke="#10e020" /><path d="M69 624.500h18" stroke="#e01010" />
    <Axis at={[69, 610]} c="#10f020">Y</Axis>
    <Axis at={[69, 625]} c="#1010e0">Z</Axis>
    <Axis at={[83, 625]} c="#e01010">X</Axis>
    <CanvasLabel x="183" y="642" fill={LABEL}>front</CanvasLabel>
  </Ortho>
);

const SideView = () => (
  <Ortho box={[381, 457, 456, 193]} origin={[471, 555]} major={77.4} minorColor="#84848a">
    <path d="M471 554.500H749" {...CURVE} />
    <polyline {...CURVE} points="474,458 435,460.500 420,463.500 409,470 403,476 394,492 397,505 409,513 424,519 445,525 453,531 461,539 471,554" />
    <polyline {...CURVE} points="745,458 777,460.500 798,463.500 810,470 818,480 826,493 823,504 812,512 799,518 774,525 765,531 757,541 749,554" />
    <path d="M408 608v16" stroke="#10e020" /><path d="M391 624.500h17" stroke="#1010e0" />
    <Axis at={[407, 610]} c="#10f020">Y</Axis>
    <Axis at={[391, 625]} c="#1010e0">Z</Axis>
    <Axis at={[407, 625]} c="#e01010">X</Axis>
    <CanvasLabel x="590" y="642" fill={LABEL}>side</CanvasLabel>
  </Ortho>
);

const View = ({ name, children }: { name: string; children: React.ReactNode }) => (
  <ViewPanel aria-label={name}>
    <ViewMenu>
      {["View", "Shading", "Lighting", "Show", "Panels"].map((m) => (
        <MenuItem key={m}>{m}</MenuItem>
      ))}
    </ViewMenu>
    {children}
  </ViewPanel>
);

/* ---------- channel box ---------- */

const SidePanel = styled.aside`
  flex: none;
  width: 182px;
  padding: 2px 1px 0 3px;
  display: flex;
  flex-direction: column;
`;

const SideTools = styled.div`
  height: 26px;
  display: flex;
  align-items: center;
  span { flex: 1; }
`;

const SideTool = styled.button<{ $look?: "up" | "in" }>`
  width: 22px;
  height: 24px;
  display: grid;
  place-items: center;
  ${(p) => p.$look === "up" && raised}
  ${(p) => p.$look === "in" && sunken}
`;

const Box = styled.section<{ $grow: number }>`
  flex: ${(p) => p.$grow} 1 0;
  display: flex;
  flex-direction: column;
  border: 1px solid #000;
  border-right-color: #fff;
  border-bottom-color: #b5b3b8;
  margin-bottom: 6px;
`;

const BoxMenu = styled.nav`
  height: 20px;
  display: flex;
  align-items: center;
  gap: 11px;
  padding-left: 4px;
  background: #fff;
  border-bottom: 1px solid #8d8b90;
`;

const BoxList = styled.div<{ $dark?: boolean }>`
  flex: 1;
  margin: 1px;
  border: 1px solid ${(p) => (p.$dark ? "#000" : "#a3a1a7")};
  border-right-color: #c9c7cc;
  border-bottom-color: #a3a1a7;
  display: flex;
  flex-direction: column;
  justify-content: space-between;
  align-items: flex-end;
  padding: 1px;
`;

const LayerBar = styled.div`
  height: 27px;
  padding: 0 1px;
  display: flex;
  align-items: center;
  justify-content: space-between;
`;

const PagerRow = styled.div`
  height: 15px;
  display: flex;
  gap: 2px;
  button {
    flex: 1;
    ${raised}
    display: grid;
    place-items: center;
  }
`;

/* ---------- time and range sliders ---------- */

const TimeRow = styled.section`
  height: 33px;
  display: flex;
  border-top: 1px solid #a9a7ac;
  align-items: center;
`;

const Ruler = styled.div`
  flex: 1;
  min-width: 0;
  align-self: stretch;
  display: flex;
  overflow: hidden;
  border-right: 1px solid #8d8b90;
  border-left: 1px solid #9a989e;
  margin-right: 4px;
`;

const Tick = styled.div<{ $last?: boolean }>`
  flex: ${(p) => (p.$last ? "0 0 9px" : "1 1 0")};
  min-width: 0;
  font: bold 13px/14px "DejaVu Sans Mono", monospace;
  padding-top: 1px;
  position: relative;
  text-indent: ${(p) => (p.$last ? 0 : 2)}px;
  &::after {
    content: "";
    display: block;
    width: 2px;
    height: 15px;
    background: #000;
  }
`;

const CurrentTime = styled.div`
  position: absolute;
  left: 2px;
  top: 2px;
`;

const PlayButton = styled.button`
  width: 28px;
  height: 26px;
  display: grid;
  place-items: center;
  ${raised}
`;

const RangeRow = styled.section`
  height: 24px;
  display: flex;
  align-items: flex-start;
`;

const RangeItems = styled.div`
  flex: 1;
  min-width: 0;
  display: flex;
  gap: 3px;
  padding: 0 1px;
`;

const RangeTrack = styled.div`
  flex: 1;
  height: 22px;
  padding: 0 5px;
  border: 2px solid #a3a1a7;
  border-left-width: 5px;
  border-right-width: 4px;
  display: flex;
  align-items: center;
  justify-content: space-between;
  color: #fff;
`;

const RangeEnd = styled.span`
  display: flex;
  align-items: center;
  gap: 5px;
  font-size: 12px;
`;

const Thumb = styled.button`
  width: 11px;
  height: 13px;
  ${raised}
`;

const IconButton = styled.button<{ $w?: number }>`
  width: ${(p) => p.$w ?? 19}px;
  height: 20px;
  flex: none;
  display: grid;
  place-items: center;
  ${raised}
`;

const CommandRow = styled.section`
  height: 26px;
  display: flex;
  align-items: center;
  padding: 0 1px 0 12px;
`;

const CommandInput = styled.input`
  flex: 497 1 0;
  min-width: 0;
  height: 20px;
  background: #fff;
  ${sunken}
`;

const CommandResult = styled.output`
  flex: 487 1 0;
  height: 20px;
  margin: 0 4px 0 6px;
  background: #929da8;
  ${sunken}
`;

const tri = (x: number, w: number, left: boolean, h = 10) =>
  left ? `M${x + w} ${9 - h / 2}V${9 + h / 2}L${x} 9z` : `M${x} ${9 - h / 2}V${9 + h / 2}L${x + w} 9z`;
const playIcons: [string, string, string?, string?][] = [
  ["Go to start", tri(7, 5, true, 5) + tri(13, 5, true, 5), "M4 6v6"],
  ["Step back frame", tri(9, 8, true), "M5 4v10"],
  ["Step back key", tri(9, 8, true), undefined, "M5 1v16"],
  ["Play backwards", tri(3, 13, true, 13)],
  ["Play forwards", tri(4, 13, false, 13)],
  ["Step forward key", tri(3, 8, false), undefined, "M15 1v16"],
  ["Step forward frame", tri(3, 8, false), "M15 4v10"],
  ["Go to end", tri(2, 5, false, 5) + tri(8, 5, false, 5), "M16 6v6"],
];

const FrameGlyph = ({ ball }: { ball?: boolean }) =>
  icon(14, 13, <><path d="M1 1h12v11H1z" fill="#fff" stroke="#000" strokeWidth="1.500" /><path d={ball ? "M1 3.500h12" : "M1 6h12"} stroke="#000" strokeWidth="2" />{ball && <path d="M3 6l3 3 5-3M5 10l6-1" fill="none" stroke="#000" strokeWidth="1.500" />}</>);

/* ---------- floating windows ---------- */

const Floater = styled.section`
  position: absolute;
  left: 58px;
  top: 391px;
  width: 122px;
  border: 2px solid #3c7cd0;
  background: #fff;
`;

const FloaterTitle = styled.header`
  height: 20px;
  display: flex;
  align-items: center;
  justify-content: space-between;
  padding-right: 3px;
  background: linear-gradient(#6ba4e4, #3f80d2 40%, #2453ae);
  h2 {
    margin: 0;
    font: bold 11px ${TITLE_FONT};
    color: #fff;
  }
`;

const TearOff = styled.div`
  height: 4px;
  margin: 0 1px;
  background: #181818;
`;

const FloaterItem = styled.button`
  width: 100%;
  height: 20px;
  display: flex;
  align-items: center;
  justify-content: space-between;
  padding: 0 7px 0 17px;
`;

const FloaterList = styled.div`
  padding-bottom: 1px;
`;

const OptionBox = () =>
  icon(10, 10, <><path d="M3 .5h6.500V7L7 9.500H.5V3z" /><path d="M1.500 3h5v5.500h-5z" fill="#fff" /></>);

const Minimized = styled.div`
  position: absolute;
  left: 0;
  bottom: 30px;
  display: flex;
`;

const MiniWindow = styled.section`
  width: 160px;
  height: 31px;
  display: flex;
  align-items: center;
  gap: 2px;
  padding: 0 5px 0 6px;
  border: 1px solid #2453a8;
  border-radius: 7px 7px 0 0;
  background: linear-gradient(#4a84d2, #7eb2ea 3px, #4a88d8 45%, #3068c0 80%, #2250a8);
  h2 {
    flex: 1;
    min-width: 0;
    margin: 0;
    font: 600 13px/20px ${TITLE_FONT};
    color: #fff;
    text-shadow: 1px 1px 0 #16357c;
    white-space: nowrap;
  }
`;

/* ---------- task bar ---------- */

const TaskBar = styled.footer`
  height: 30px;
  display: flex;
  align-items: stretch;
  color: #fff;
  background: linear-gradient(#2a5cc0, #6aa6ee 2px, #4382dc 6px, #3b76d2 15px, #2b60bc 24px, #1c4498);
`;

const StartButton = styled.button`
  width: 100px;
  display: flex;
  align-items: center;
  gap: 8px;
  padding-left: 10px;
  font: italic 19px/26px "Noto Sans CJK SC", sans-serif;
  color: #fff;
  text-shadow: 1px 1px 1px #184a10;
  border-radius: 0 8px 8px 0;
  background: linear-gradient(#2e8a2c, #86cc78 3px, #3fa53a 8px, #35a030 18px, #2b9a22 24px, #1e6e1a);
  box-shadow: 1px 0 1px #123c80;
`;

const QuickLaunch = styled.div`
  width: 168px;
  display: flex;
  align-items: center;
  gap: 7px;
  padding-left: 10px;
`;

const Tasks = styled.div`
  flex: 1;
  min-width: 0;
  display: flex;
  align-items: center;
  gap: 2px;
`;

const Task = styled.button<{ $active?: boolean }>`
  flex: 0 1 100px;
  min-width: 0;
  height: 25px;
  display: flex;
  align-items: center;
  gap: 4px;
  padding-left: 8px;
  color: #fff;
  font-size: 12px;
  white-space: nowrap;
  border-radius: 3px;
  border: 1px solid ${(p) => (p.$active ? "#16357c" : "#2b5fb8")};
  background: ${(p) =>
    p.$active ? "linear-gradient(#162f78, #1f4590)" : "linear-gradient(#5a98ea, #3f7cd6 40%, #3468c4)"};
`;

const TrayTools = styled.div`
  display: flex;
  align-items: center;
  gap: 10px;
  padding: 0 20px 0 6px;
`;

const Clock = styled.div`
  width: 57px;
  padding-left: 16px;
  position: relative;
  font-size: 12px;
  line-height: 30px;
  background: linear-gradient(#4a90e0, #9cd0fa 3px, #6cb2f0 15px, #4a94dc);
  svg {
    position: absolute;
    left: -9px;
    top: 7px;
  }
`;

const Logo16 = ({ kind }: { kind: string }) => {
  if (kind === "maya") return <MayaLogo />;
  if (kind === "folder")
    return icon(16, 14, <><path d="M1 3l2-2h4l2 2h5v3H3z" fill="#e8b840" stroke="#a07818" /><path d="M1 12V4h13v8z" fill="#f8d868" stroke="#b08820" /><path d="M2 12l3-6h10l-2 6z" fill="#fff0a0" stroke="#b08820" /></>);
  if (kind === "note")
    return icon(14, 16, <><path d="M3 1h10v13l-3 1H1z" fill="#8cd4ec" stroke="#2a7ca0" /><path d="M3 2l-1 12" stroke="#d8f4fc" strokeWidth="1.500" /></>);
  if (kind === "ie")
    return icon(16, 16, <><path d="M13 11C10 15 3 14 3 8S11 1 13 7H5" fill="none" stroke="#4ab4f4" strokeWidth="2.500" /><path d="M1 13C0 9 10 0 15 3" fill="none" stroke="#8cd8ff" strokeWidth="1.500" /></>);
  if (kind === "mail")
    return icon(16, 16, <><path d="M2 4l11-2 1 11-11 2z" fill="#d8ecf8" stroke="#246" /><circle cx="8" cy="8" r="4" fill="none" stroke="#2080c8" strokeWidth="2" /><path d="M5 8h6" stroke="#2080c8" /></>);
  if (kind === "printer")
    return icon(17, 16, <><path d="M3 1h10v6H3z" fill="#fff" stroke="#888" /><path d="M1 6h14v7H1z" fill="#e8dcb0" stroke="#887" /><path d="M4 3h7M4 5h7M2 10h12" stroke="#666" /></>);
  if (kind === "pc")
    return icon(12, 16, <><rect x="1" y="1" width="10" height="9" rx="1" fill="#6cbcf4" stroke="#cfe6fa" /><path d="M4 10h4v3H4zM2 14h8" fill="#c8d8e8" stroke="#c8d8e8" /></>);
  if (kind === "movie")
    return icon(17, 17, <><path d="M1 3L12 1V5L16 6V16H1z" fill="#181818" /><path d="M3 5h9v8H3z" fill="#58b8a8" /><path d="M6 4l8 5-8 4z" fill="#1020c0" /><path d="M2 14.500h12M3 2.500l6-1" stroke="#e8e040" strokeWidth="1.500" strokeDasharray="2 1.500" /></>);
  return icon(17, 17, <>
    <circle cx="8" cy="8" r="7.500" fill="#e8742c" /><path d="M8 .5A7.500 7.500 0 0 1 15.500 8H8z" fill="#f4c82c" /><path d="M15.500 8A7.500 7.500 0 0 1 8 15.500V8z" fill="#48a83c" /><path d="M.5 8A7.500 7.500 0 0 0 8 15.500V8z" fill="#3070d8" /><circle cx="8" cy="8" r="4.500" fill="#fff" /><path d="M6.500 5.500L11 8L6.500 10.500z" fill="#204080" /></>);
};

const tasks: [string, string, boolean?][] = [
  ["wmp", "Windows ..."],
  ["folder", "D:\\music\\..."],
  ["maya", "Maya 6.0...", true],
  ["maya", "Output W..."],
  ["folder", "E:\\Maya ..."],
  ["note", "新建 文..."],
];

const menus = ["File", "Edit", "Modify", "Create", "Display", "Window", "Edit Curves", "Surfaces", "Edit NURBS", "Polygons", "Edit Polygons", "Subdiv Surfaces", "Help"];
const tabs = ["General", "Curves", "Surfaces", "Polygons", "Subdivs", "Deformation", "Animation", "Dynamics", "Rendering", "PaintEffects", "Cloth", "Fluids", "Fur", "Custom"];

export default function App() {
  return (
    <Screen>
      <Global />
      <TitleBar>
        <MayaLogo />
        <TitleText>Maya 6.0CG: E:\Maya Program\aigo U disk.mb</TitleText>
        <CaptionButton aria-label="Minimize"><CaptionGlyph kind="min" /></CaptionButton>
        <CaptionButton aria-label="Restore"><CaptionGlyph kind="restore" /></CaptionButton>
        <CaptionButton aria-label="Close" $close><CaptionGlyph kind="close" /></CaptionButton>
      </TitleBar>

      <MenuBar>{menus.map((m) => <MenuItem key={m}>{m}</MenuItem>)}</MenuBar>

      <StatusLine>
        <Grip />
        <SelectBox $w={78}>
          <select aria-label="Menu set"><option>Modeling</option></select>
          <DownTri />
        </SelectBox>
        <Group $pad={2}><Divider /></Group>
        {fileIcons.map((i, n) => <ToolCell key={n} $w={27} aria-label="File action">{i}</ToolCell>)}
        <Divider />
        <ToolCell $w={20} aria-label="Mask menu"><MenuMarks /></ToolCell>
        <Field $flat $w={91} aria-label="Selection mask" defaultValue="Objects" />
        <Group $pad={3}><Divider /></Group>
        {modeIcons.map((i, n) => <ToolCell key={n} $pressed={n === 1} aria-label="Selection mode">{i}</ToolCell>)}
        <Divider />
        <ToolCell $w={20} aria-label="Mask options"><MenuMarks /></ToolCell>
        {maskIcons.map((i, n) => <ToolCell key={n} $pressed aria-label="Selection mask type">{i}</ToolCell>)}
        <Group $pad={2}>
          {lockIcons.map((i, n) => <ToolCell key={n} aria-label="Lock option">{i}</ToolCell>)}
        </Group>
        <Divider />
        {snapIcons.map((i, n) => <ToolCell key={n} aria-label="Snap option">{i}</ToolCell>)}
        <Divider />
        <Divider />
        {renderIcons.map((i, n) => <ToolCell key={n} $w={28} aria-label="Render option">{i}</ToolCell>)}
        <Group $pad={2}>
          {editorIcons.map((i, n) => <ToolCell key={n} aria-label="Show editor">{i}</ToolCell>)}
        </Group>
      </StatusLine>

      <ShelfArea>
        <Grip />
        <ShelfSwitch>
          <ShelfSwitchButton aria-label="Shelf tabs">
            {icon(14, 10, <><path d="M0 1h12v8H0z" fill="#f6f5f8" stroke="#bbb" /><path d="M13 0v9" stroke="#000" /></>)}
          </ShelfSwitchButton>
          <ShelfSwitchButton aria-label="Shelf menu"><DownTri w={12} /></ShelfSwitchButton>
        </ShelfSwitch>
        <ShelfMain>
          <TabRow>
            {tabs.map((t) => <Tab key={t} $active={t === "Curves"}>{t}</Tab>)}
            <Trash aria-label="Trash">
              {icon(13, 16, <><path d="M1 5h11l-1 11H2z" fill="#777" stroke="#111" /><path d="M4 6v9M6.500 6v9M9 6v9" stroke="#222" /><path d="M0 3.500h13M5 1h3" stroke="#111" strokeWidth="2" /></>)}
            </Trash>
          </TabRow>
          <ShelfBody>
            {shelfIcons.map(([name, art]) => (
              <ShelfButton key={name} aria-label={name}>{icon(32, 32, art)}</ShelfButton>
            ))}
            <ScrollPair>
              <ScrollButton aria-label="Scroll shelf up"><Chevron /></ScrollButton>
              <ScrollButton aria-label="Scroll shelf down"><Chevron down /></ScrollButton>
            </ScrollPair>
          </ShelfBody>
        </ShelfMain>
      </ShelfArea>

      <Workspace>
        <ToolBox>
          <Grip $across />
          {toolIcons.map(([name, art]) => (
            <ToolButton key={name} $active={name === "Move"} aria-label={name}>{icon(32, 32, art)}</ToolButton>
          ))}
          <LayoutButtons>
            {layoutIcons.map(([name, art]) => (
              <LayoutButton key={name} aria-label={name}>{icon(30, 30, art)}</LayoutButton>
            ))}
            <ArrowPair>
              <button aria-label="Layouts left"><DownTri w={6} /></button>
              <button aria-label="Layouts right"><DownTri w={6} /></button>
            </ArrowPair>
          </LayoutButtons>
        </ToolBox>

        <Views>
          <View name="top"><TopView /></View>
          <View name="persp"><PerspView /></View>
          <View name="front"><FrontView /></View>
          <View name="side"><SideView /></View>
        </Views>

        <SidePanel>
          <Grip $across />
          <SideTools>
            <SideTool aria-label="Channel box"><Bars d="M0 4h8M0 8h8M0 12h8M0 16h8M9.500 2v16M10 4h6M10 8h6M10 12h6M10 16h6" /></SideTool>
            <SideTool aria-label="Layer editor"><Bars d="M1 4h3M1 9h3M1 15h3M10 4h7M10 9h7M10 15h7" extra={<><path d="M5 2h4v3H5z" fill="#40a8b0" /><path d="M5 8h4v3H5z" fill="#8040a0" /><path d="M5 13h4v4H5z" fill="#e0d040" /></>} /></SideTool>
            <SideTool $look="in" aria-label="Channel box and layers"><Bars d="M2 4h7M2 7h7M9.500 1v8M11 4h6M11 7h6M1 11h16M1 15h4M11 15h6" extra={<path d="M6 13h4v4H6z" fill="#60c8c8" />} /></SideTool>
            <span />
            <SideTool $look="up" aria-label="Manipulator">
              {icon(16, 16, <><path d="M9 9V5" stroke="#0a8020" strokeWidth="2" /><path d="M9 1L6.500 6h5z" fill="#10c020" /><path d="M9 10H5" stroke="#1020c0" strokeWidth="2" /><path d="M0 11L6 7.500V13z" fill="#1020d0" /><path d="M9 9l6 2v3h-4z" fill="#d01818" /></>)}
            </SideTool>
            <SideTool $look="up" aria-label="Speed">
              {icon(16, 16, <><circle cx="8" cy="8" r="6.500" fill={FACE} stroke="#807e84" strokeWidth="2" /><path d="M8 1v14A7 7 0 0 1 8 1z" fill="#807e84" /></>)}
            </SideTool>
            <SideTool $look="up" aria-label="Direction">
              {icon(16, 16, <><path d="M2 14L11 5" stroke="#807e84" strokeWidth="2.500" /><path d="M14 2L12 10L6 4z" fill="#807e84" /></>)}
            </SideTool>
          </SideTools>
          <Box $grow={190}>
            <BoxMenu><MenuItem>Channels</MenuItem><MenuItem>Object</MenuItem></BoxMenu>
            <BoxList />
          </Box>
          <Box $grow={264}>
            <BoxMenu><MenuItem>Layers</MenuItem><MenuItem>Options</MenuItem></BoxMenu>
            <LayerBar>
              <SelectBox $w={64}>
                <select aria-label="Layer type"><option>Display</option></select>
                <DownTri w={8} />
              </SelectBox>
              <SideTool $look="up" aria-label="New layer">
                {icon(20, 20, <><path d="M3 15l12-3 3 3-10 4z" fill="#888" stroke="#111" /><path d="M2 10l13-4 3 4-13 4z" fill="#fff" stroke="#111" /><path d="M5 4l8-3 5 2-10 3z" fill="#999" stroke="#111" /></>)}
              </SideTool>
            </LayerBar>
            <BoxList $dark>
              <ScrollButton aria-label="Scroll layers up"><Chevron /></ScrollButton>
              <ScrollButton aria-label="Scroll layers down"><Chevron down /></ScrollButton>
            </BoxList>
          </Box>
          <PagerRow>
            <button>&lt;&lt;</button>
            <button>&gt;&gt;</button>
          </PagerRow>
        </SidePanel>
      </Workspace>

      <TimeRow>
        <Grip />
        <Ruler>
          {["\u00a0", 20, 40, 60, 80, 100, 120, 140, 160, 180, 200, 220].map((n, i) => (
            <Tick key={i}>
              {n}
              {i === 0 && (
                <CurrentTime>
                  {icon(10, 28, <><ellipse cx="3.500" cy="6" rx="3" ry="5" /><path d="M3.500 0v28M7.500 17v10M5 26h4" stroke="#000" strokeWidth="1.500" /></>)}
                </CurrentTime>
              )}
            </Tick>
          ))}
          <Tick $last>2</Tick>
        </Ruler>
        <Field $w={67} aria-label="Current frame" defaultValue="1.00" />
        <Group $pad={1}>
          {playIcons.map(([name, fill, bar, red]) => (
            <PlayButton key={name} aria-label={name}>
              {icon(20, 18, <>
                <path d={fill} fill="#8e8c92" stroke="#333" strokeWidth=".8" />
                {bar && <path d={bar} stroke="#444" strokeWidth="2" />}
                {red && <path d={red} stroke="#90181c" strokeWidth="2" />}
              </>)}
            </PlayButton>
          ))}
        </Group>
      </TimeRow>

      <RangeRow>
        <Grip />
        <RangeItems>
          <Field aria-label="Animation start" defaultValue="0.00" />
          <Field aria-label="Playback start" defaultValue="1.00" />
          <RangeTrack>
            <RangeEnd><Thumb aria-label="Range start" />1</RangeEnd>
            <RangeEnd>240<Thumb aria-label="Range end" /></RangeEnd>
          </RangeTrack>
          <Field aria-label="Playback end" defaultValue="240.00" />
          <Field aria-label="Animation end" defaultValue="240.00" />
          <IconButton $w={22} aria-label="Character menu"><DownTri w={16} /></IconButton>
          <Field $flat $w={99} aria-label="Character set" defaultValue="No Character Set" />
          <IconButton $w={28} aria-label="Auto keyframe">
            {icon(22, 12, <><path d="M0 6h13M3 6v4M7 6v3" stroke="#000" strokeWidth="2.500" /><ellipse cx="17" cy="6" rx="3.500" ry="4.500" fill="none" stroke="#000" strokeWidth="2" /></>)}
          </IconButton>
          <IconButton aria-label="Preferences"><FrameGlyph ball /></IconButton>
        </RangeItems>
      </RangeRow>

      <CommandRow>
        <CommandInput aria-label="Command" />
        <CommandResult />
        <IconButton aria-label="Script editor"><FrameGlyph /></IconButton>
      </CommandRow>

      <TaskBar>
        <StartButton>
          {icon(18, 18, <><path d="M3 2C6 0 7 1 9 2L7.500 8C5 7 4 7 1 8z" fill="#e8502c" /><path d="M10 2.500C13 3.500 14 3 17 2L15 8C13 9 11 9 8.500 8z" fill="#7cc83c" /><path d="M1 9C4 8 5 8 7 9L5.500 15C3 14 2 14 0 15z" fill="#3c84e8" /><path d="M8 9.500C11 10.500 12 10 15 9L13 15C11 16 9 16 6.500 15z" fill="#f4c82c" /></>)}
          开始
        </StartButton>
        <QuickLaunch>
          {["wmp", "ie", "mail", "printer", "pc", "movie"].map((k) => <Logo16 key={k} kind={k} />)}
        </QuickLaunch>
        <Tasks>
          {tasks.map(([k, label, active]) => (
            <Task key={label} $active={active}><Logo16 kind={k} />{label}</Task>
          ))}
        </Tasks>
        <TrayTools>
          {icon(16, 13, <><path d="M1 5h14v7H1z" fill="#fff" stroke="#000" /><path d="M3 7.500h10M3 10h10" stroke="#000" strokeDasharray="1 1" strokeWidth="1.500" /><path d="M8 5V2h4" fill="none" stroke="#000" /></>)}
          {icon(13, 14, <><path d="M1 1h11v12H1z" fill="#fffbd0" stroke="#000" strokeWidth="1.500" /><path d="M4 5C4 2 9 2 9 5C9 7 6.500 7 6.500 9M6.500 10v2" fill="none" stroke="#000" strokeWidth="1.500" /></>)}
          {icon(8, 18, <><path d="M2 1h6v4H6M0 3h5v4H0z" fill="none" stroke="#fff" /><path d="M1 14h6l-3 3z" fill="#fff" /></>)}
        </TrayTools>
        <Clock>
          {icon(17, 17, <><circle cx="8.500" cy="8.500" r="7.500" fill="#5a96e0" stroke="#cfe4fa" strokeWidth="1.500" /><path d="M10.500 5L7 8.500L10.500 12" fill="none" stroke="#fff" strokeWidth="2" /></>)}
          16:22
        </Clock>
      </TaskBar>

      <Floater>
        <FloaterTitle>
          <h2>Birail</h2>
          <CaptionButton $size={13} aria-label="Close Birail">{icon(8, 8, <path d="M1 1l6 6M7 1l-6 6" stroke="#fff" strokeWidth="2" />)}</CaptionButton>
        </FloaterTitle>
        <TearOff />
        <FloaterList>
          {["Birail 1 Tool", "Birail 2 Tool", "Birail 3+ Tool"].map((t) => (
            <FloaterItem key={t}>{t}<OptionBox /></FloaterItem>
          ))}
        </FloaterList>
      </Floater>

      <Minimized>
        {["Multilis...", "Outliner"].map((t) => (
          <MiniWindow key={t}>
            <MayaLogo />
            <h2>{t}</h2>
            <CaptionButton aria-label={`Restore ${t}`}><CaptionGlyph kind="restore" /></CaptionButton>
            <CaptionButton aria-label={`Maximize ${t}`}><CaptionGlyph kind="max" /></CaptionButton>
            <CaptionButton $close aria-label={`Close ${t}`}><CaptionGlyph kind="close" /></CaptionButton>
          </MiniWindow>
        ))}
      </Minimized>
    </Screen>
  );
}
